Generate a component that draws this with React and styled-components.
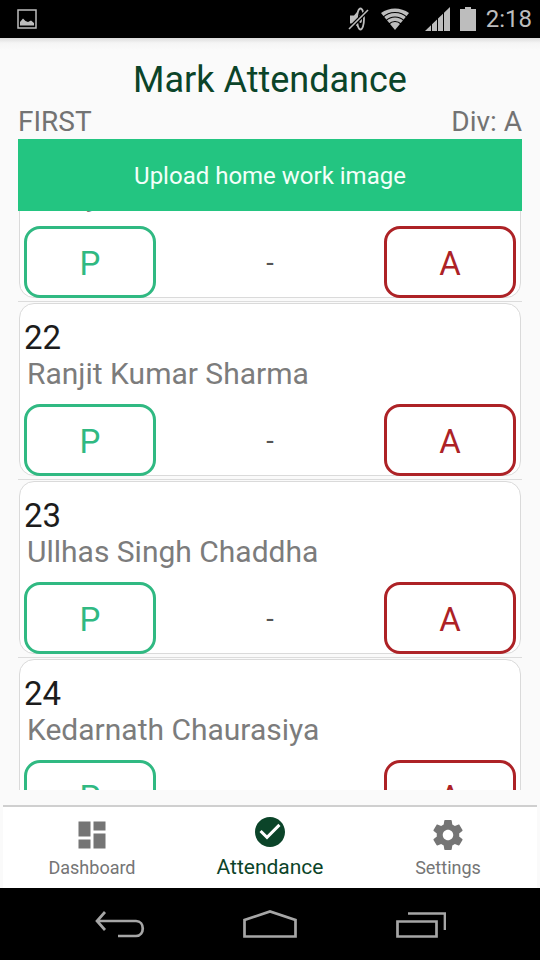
import React, { useLayoutEffect, useRef, useState } from "react";
import styled, { createGlobalStyle } from "styled-components";
import { MdCheckCircle, MdDashboard } from "react-icons/md";

const GREEN = "#23c581";
const OUTLINE_GREEN = "#30b982";
const RED = "#ad2226";
const DARK_GREEN = "#0b4429";

const GlobalStyle = createGlobalStyle`
  *, *::before, *::after { box-sizing: border-box; }
  body {
    margin: 0;
    background: #fafafa;
    font-family: Roboto, "Noto Sans", sans-serif;
  }
  button { font: inherit; padding: 0; cursor: pointer; }
  svg { display: block; }
`;

const Screen = styled.div`
  display: flex;
  flex-direction: column;
  height: 100vh;
  background: #fafafa;
`;

const StatusBar = styled.div`
  display: flex;
  align-items: center;
  flex: none;
  height: 38px;
  padding: 0 8px 0 17px;
  background: #000;
  color: #bdbdbd;
`;

const StatusIcons = styled.div`
  display: flex;
  align-items: center;
  gap: 10px;
  margin-left: auto;
`;

const Clock = styled.time`
  font-size: 24px;
  line-height: 38px;
`;

const Header = styled.header`
  flex: none;
  padding: 18px 18px 0;
  background: linear-gradient(#dcdcdc, #f5f5f5 5px, #fafafa 12px);
`;

const Title = styled.h1`
  margin: 0;
  font-size: 36px;
  font-weight: 400;
  line-height: 48px;
  text-align: center;
  color: ${DARK_GREEN};
`;

const ClassInfo = styled.div`
  display: flex;
  justify-content: space-between;
  font-size: 28px;
  line-height: 35px;
  color: #737373;
`;

const Main = styled.main`
  display: flex;
  flex-direction: column;
  flex: 1;
  min-height: 0;
  padding: 0 18px 15px;
`;

const UploadButton = styled.button`
  flex: none;
  height: 72px;
  padding-top: 2px;
  border: 0;
  background: ${GREEN};
  color: #f2fff9;
  font-size: 24px;
`;

const StudentList = styled.ul`
  flex: 1;
  min-height: 0;
  margin: 0;
  padding: 0;
  overflow-y: auto;
  scrollbar-width: none;
  list-style: none;
`;

const StudentItem = styled.li`
  padding: 1px 1px 3px;
  border-bottom: 1px solid #dcdcdc;
`;

const Card = styled.article`
  padding: 14px 4px 0;
  border: 1px solid #dadada;
  border-radius: 15px;
  background: #fff;
`;

const RollNumber = styled.div`
  font-size: 33px;
  line-height: 40px;
  color: #1c1c1c;
`;

const StudentName = styled.h2`
  margin: 0 0 14px;
  padding-left: 3px;
  font-size: 30px;
  font-weight: 400;
  line-height: 32px;
  color: #7c7c7c;
`;

const MarkRow = styled.div`
  display: flex;
  align-items: center;
  justify-content: space-between;
  margin-bottom: -1px;
`;

const MarkButton = styled.button`
  width: 132px;
  height: 72px;
  padding-top: 2px;
  border: 3px solid ${({ $color }) => $color};
  border-radius: 16px;
  background: #fff;
  color: ${({ $color }) => $color};
  font-size: 33px;
`;

const MarkValue = styled.span`
  padding-top: 2px;
  font-size: 27px;
  line-height: 36px;
  color: #555;
`;

const TabBar = styled.nav`
  display: flex;
  flex: none;
  height: 83px;
  margin: 0 3px;
  border-top: 2px solid #cfcfcf;
  background: #fff;
`;

const Tab = styled.button`
  display: flex;
  flex: 1;
  flex-direction: column;
  align-items: center;
  padding-top: ${({ $active }) => ($active ? 7 : 10)}px;
  border: 0;
  background: none;
  color: ${({ $active }) => ($active ? DARK_GREEN : "#757575")};
  font-size: ${({ $active }) => ($active ? 21 : 18)}px;
  line-height: ${({ $active }) => ($active ? 34 : 30)}px;
`;

const SystemBar = styled.nav`
  display: flex;
  justify-content: center;
  flex: none;
  height: 72px;
  background: #000;
`;

const SystemButton = styled.button`
  display: flex;
  align-items: center;
  justify-content: center;
  width: 150px;
  border: 0;
  background: none;
  color: #a6a6a6;
`;

const PictureIcon = () => (
  <svg width="20" height="20" viewBox="0 0 20 20" aria-hidden="true">
    <rect x="1" y="1" width="18" height="18" fill="none" stroke="currentColor" strokeWidth="1.5" />
    <path d="M3 16.500V13L6 9.500L8.500 12L11 13L14 11.500L17 14V16.500Z" fill="currentColor" />
  </svg>
);

const MutedIcon = () => (
  <svg width="22" height="24" viewBox="0 0 22 24" aria-hidden="true">
    <path d="M2 8.500H6L12 1.500V22L6 16.500H2Z" fill="currentColor" />
    <ellipse cx="12.500" cy="12" rx="3.500" ry="10.500" fill="#000" stroke="currentColor" strokeWidth="1.800" />
    <ellipse cx="12.500" cy="12" rx="1.500" ry="4" fill="currentColor" />
    <path d="M1 22L20 3" stroke="#000" strokeWidth="4" />
    <path d="M1 22L20 3" stroke="currentColor" strokeWidth="1.600" />
  </svg>
);

const WifiIcon = () => (
  <svg width="35" height="22" viewBox="0 0 35 22" aria-hidden="true">
    <path d="M1 5C9 -1 21 -1 29 5L15 22Z" fill="currentColor" />
    <g fill="none" stroke="#000" strokeWidth="1.200">
      <circle cx="15" cy="22" r="17.500" />
      <circle cx="15" cy="22" r="13" />
      <circle cx="15" cy="22" r="8.500" />
    </g>
  </svg>
);

const SignalIcon = () => (
  <svg width="25" height="24" viewBox="0 0 25 24" aria-hidden="true">
    <path d="M0 24L25 0V24Z" fill="currentColor" />
    <path d="M6.500 0V24M12.500 0V24M18.500 0V24" stroke="#000" strokeWidth="1" />
  </svg>
);

const BatteryIcon = () => (
  <svg width="16" height="24" viewBox="0 0 16 24" aria-hidden="true">
    <path d="M0 2H5V0H11V2H16V24H0Z" fill="currentColor" />
  </svg>
);

const GearIcon = ({ size, ...rest }) => (
  <svg width={size} height={size} viewBox="0 0 24 24" fill="currentColor" {...rest}>
    <path d="M19.430 12.980c.04-.32.07-.64.07-.98s-.03-.66-.07-.98l2.110-1.650c.19-.15.24-.42.12-.64l-2-3.460c-.12-.22-.39-.3-.61-.22l-2.490 1c-.52-.4-1.080-.73-1.690-.98l-.38-2.650C14.460 2.180 14.250 2 14 2h-4c-.25 0-.46.18-.49.42l-.38 2.650c-.61.25-1.170.59-1.690.98l-2.490-1c-.23-.09-.49 0-.61.22l-2 3.460c-.13.22-.07.49.12.64l2.110 1.650c-.04.32-.07.65-.07.98s.03.66.07.98l-2.110 1.650c-.19.15-.24.42-.12.64l2 3.460c.12.22.39.3.61.22l2.490-1c.52.4 1.080.73 1.690.98l.38 2.650c.03.24.24.42.49.42h4c.25 0 .46-.18.49-.42l.38-2.650c.61-.25 1.170-.59 1.690-.98l2.490 1c.23.09.49 0 .61-.22l2-3.460c.12-.22.07-.49-.12-.64l-2.110-1.650zM12 15.500c-1.930 0-3.500-1.570-3.500-3.500s1.570-3.500 3.500-3.500 3.500 1.570 3.500 3.500-1.570 3.500-3.500 3.500z" />
  </svg>
);

const BackIcon = () => (
  <svg width="52" height="30" viewBox="0 0 52 30" aria-hidden="true">
    <path d="M11 3L3 12L11 21M4 12H42C51 12 51 27 42 27H24" fill="none" stroke="currentColor" strokeWidth="2.700" />
  </svg>
);

const HomeIcon = () => (
  <svg width="56" height="30" viewBox="0 0 56 30" aria-hidden="true">
    <path d="M2.500 27.500V11L28 2.500L53.500 11V27.500Z" fill="none" stroke="currentColor" strokeWidth="2.700" />
  </svg>
);

const RecentsIcon = () => (
  <svg width="52" height="30" viewBox="0 0 52 30" aria-hidden="true">
    <path d="M3.500 12.500H42.500V27.500H3.500ZM14 4.500H51V21" fill="none" stroke="currentColor" strokeWidth="2.700" />
  </svg>
);

const STUDENTS = [
  { roll: 21, name: "Binay Kumar" },
  { roll: 22, name: "Ranjit Kumar Sharma" },
  { roll: 23, name: "Ullhas Singh Chaddha" },
  { roll: 24, name: "Kedarnath Chaurasiya" },
];

const TABS = [
  { label: "Dashboard", Icon: MdDashboard },
  { label: "Attendance", Icon: MdCheckCircle },
  { label: "Settings", Icon: GearIcon },
];

function Student({ roll, name }) {
  const [mark, setMark] = useState("-");
  return (
    <StudentItem>
      <Card>
        <RollNumber>{roll}</RollNumber>
        <StudentName>{name}</StudentName>
        <MarkRow>
          <MarkButton $color={OUTLINE_GREEN} aria-label={`P, ${name}`} onClick={() => setMark("P")}>P</MarkButton>
          <MarkValue>{mark}</MarkValue>
          <MarkButton $color={RED} aria-label={`A, ${name}`} onClick={() => setMark("A")}>A</MarkButton>
        </MarkRow>
      </Card>
    </StudentItem>
  );
}

export default function App() {
  const listRef = useRef(null);
  const [active, setActive] = useState("Attendance");

  useLayoutEffect(() => {
    listRef.current.scrollTop = 87;
  }, []);

  return (
    <Screen>
      <GlobalStyle />
      <StatusBar>
        <PictureIcon />
        <StatusIcons>
          <MutedIcon />
          <WifiIcon />
          <SignalIcon />
          <BatteryIcon />
          <Clock>2:18</Clock>
        </StatusIcons>
      </StatusBar>
      <Header>
        <Title>Mark Attendance</Title>
        <ClassInfo>
          <span>FIRST</span>
          <span>Div: A</span>
        </ClassInfo>
      </Header>
      <Main>
        <UploadButton>Upload home work image</UploadButton>
        <StudentList ref={listRef}>
          {STUDENTS.map((student) => (
            <Student key={student.roll} {...student} />
          ))}
        </StudentList>
      </Main>
      <TabBar>
        {TABS.map(({ label, Icon }) => (
          <Tab key={label} $active={label === active} onClick={() => setActive(label)}>
            <Icon size={36} aria-hidden="true" />
            {label}
          </Tab>
        ))}
      </TabBar>
      <SystemBar>
        <SystemButton aria-label="Back"><BackIcon /></SystemButton>
        <SystemButton aria-label="Home"><HomeIcon /></SystemButton>
        <SystemButton aria-label="Recent apps"><RecentsIcon /></SystemButton>
      </SystemBar>
    </Screen>
  );
}
